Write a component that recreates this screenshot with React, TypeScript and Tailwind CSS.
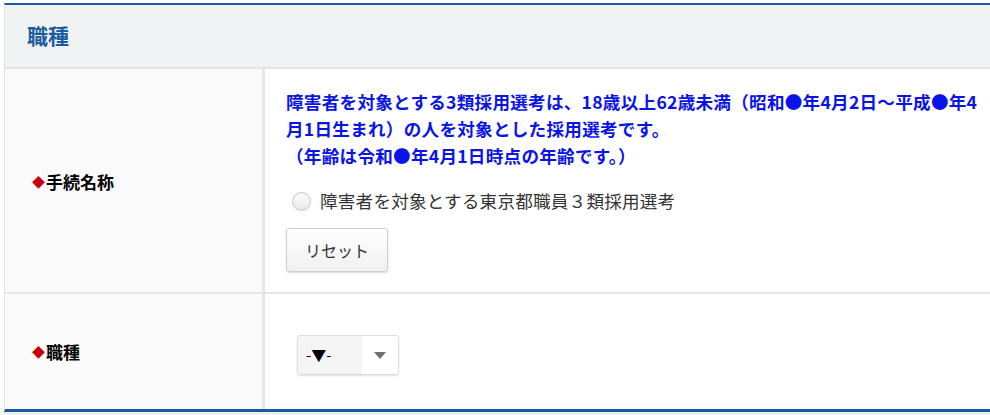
import React from "react";

const font = { fontFamily: '"Noto Sans CJK JP", "Noto Sans", sans-serif' };

const Label = ({ text }: { text: string }) => (
   <div className="flex items-center pl-[27px] text-[17px] font-bold text-black">
      <span className="text-[13px] text-[#c8000b] mr-[1px]">◆</span>
      <span>{text}</span>
   </div>
);

const App = () => {
   return (
      <div className="w-full h-[415px] overflow-hidden bg-white pt-[3px] pl-[4px]" style={font}>
         <div className="w-[1010px] border-t-[2px] border-b-[3px] border-[#1a5aa0] border-l border-l-[#e2e2e2]">
            <div className="h-[64px] bg-[#f0f2f4] border-b-[2px] border-[#e2e4e6] flex items-center pl-[22px]">
               <h2 className="text-[21px] font-bold text-[#1b5ca0]">職種</h2>
            </div>
            <div className="flex h-[225px] border-b-[2px] border-[#e6e6e6]">
               <div className="w-[260px] bg-[#fafafa] flex items-center pt-[2px] border-r-[3px] border-[#e6e6e6]">
                  <Label text="手続名称" />
               </div>
               <div className="flex-1 pl-[21px] pt-[19px]">
                  <p className="text-[17.6px] leading-[27px] font-bold tracking-[0.25px] text-[#0a14e6]">
                     障害者を対象とする3類採用選考は、18歳以上62歳未満（昭和●年4月2日～平成●年4
                     <br />
                     月1日生まれ）の人を対象とした採用選考です。
                     <br />
                     （年齢は令和●年4月1日時点の年齢です。）
                  </p>
                  <label className="flex items-center mt-[19px] ml-[6px] text-[17.6px] tracking-[0.2px] text-[#333]">
                     <span className="w-[19px] h-[19px] rounded-full border border-[#c9c9c9] bg-gradient-to-b from-white to-[#e6e6e6] shadow-[inset_0_1px_1px_rgba(0,0,0,0.08)] mr-[9px]" />
                     障害者を対象とする東京都職員３類採用選考
                  </label>
                  <button className="mt-[14px] w-[102px] h-[44px] border border-[#cfcfcf] rounded-[3px] bg-gradient-to-b from-white to-[#f0f0f0] shadow-[0_1px_2px_rgba(0,0,0,0.15)] text-[16px] text-[#333]">
                     リセット
                  </button>
               </div>
            </div>
            <div className="flex h-[115px]">
               <div className="w-[260px] bg-[#fafafa] flex items-center border-r-[3px] border-[#e6e6e6]">
                  <Label text="職種" />
               </div>
               <div className="flex-1 flex items-center pl-[32px] pt-[7px]">
                  <div className="flex w-[102px] h-[40px] border border-[#dcdcdc] rounded-[3px] shadow-[0_1px_2px_rgba(0,0,0,0.12)] overflow-hidden">
                     <div className="flex-1 bg-[#f5f5f5] flex items-center pl-[8px] text-[15px] text-black">
                        -▼-
                     </div>
                     <div className="w-[36px] bg-white flex items-center justify-center">
                        <svg width="12" height="7" viewBox="0 0 12 7">
                           <path d="M0 0h12L6 7z" fill="#707070" />
                        </svg>
                     </div>
                  </div>
               </div>
            </div>
         </div>
         <div className="h-[4px] w-[1010px] bg-[#e8f0f6]" />
      </div>
   );
};

export default App;
